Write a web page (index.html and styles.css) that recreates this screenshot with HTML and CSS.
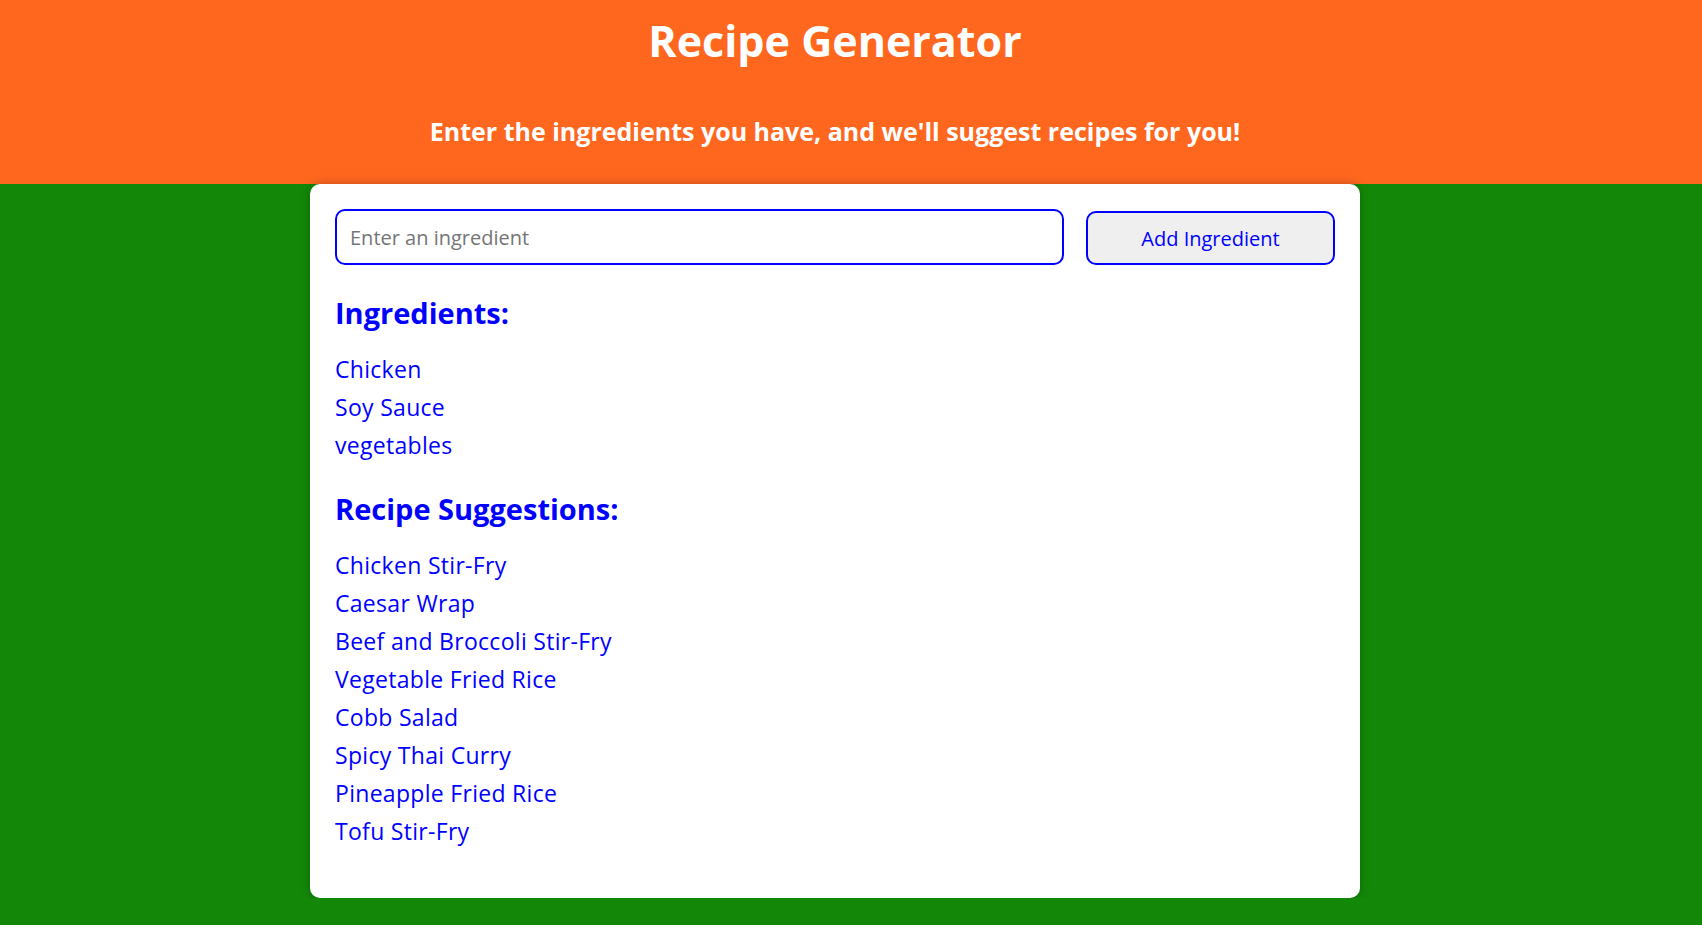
FILE: index.html
```html
<!DOCTYPE html>
<html lang="en">
<head>
<meta charset="utf-8">
<title>Recipe Generator</title>
<link rel="stylesheet" href="styles.css">
</head>
<body>
<header class="site-header">
  <h1 class="site-title">Recipe Generator</h1>
  <p class="site-subtitle">Enter the ingredients you have, and we'll suggest recipes for you!</p>
</header>
<main class="page">
  <section class="card">
    <div class="entry-row">
      <input class="entry-input" type="text" placeholder="Enter an ingredient">
      <button class="entry-button" type="button">Add Ingredient</button>
    </div>
    <h2 class="section-title first">Ingredients:</h2>
    <ul class="item-list">
      <li>Chicken</li>
      <li>Soy Sauce</li>
      <li>vegetables</li>
    </ul>
    <h2 class="section-title second">Recipe Suggestions:</h2>
    <ul class="item-list last">
      <li>Chicken Stir-Fry</li>
      <li>Caesar Wrap</li>
      <li>Beef and Broccoli Stir-Fry</li>
      <li>Vegetable Fried Rice</li>
      <li>Cobb Salad</li>
      <li>Spicy Thai Curry</li>
      <li>Pineapple Fried Rice</li>
      <li>Tofu Stir-Fry</li>
    </ul>
  </section>
</main>
</body>
</html>
```

FILE: styles.css
```css
html {
  background: #138808;
}
html, body {
  margin: 0;
  padding: 0;
}
body {
  font-family: "Open Sans", "DejaVu Sans", sans-serif;
  color: #0000ff;
}
.site-header {
  background: #ff671f;
  color: #ffffff;
  text-align: center;
  padding: 12px 32px 0 0;
  height: 172px;
}
.site-title {
  margin: 0;
  font-size: 43px;
  font-weight: 700;
  line-height: 58px;
}
.site-subtitle {
  margin: 45px 0 0;
  font-size: 25px;
  font-weight: 700;
  line-height: 32px;
}
.page {
  display: flex;
  justify-content: center;
  padding-right: 32px;
}
.card {
  width: 1000px;
  background: #ffffff;
  border-radius: 10px;
  padding: 25px 25px 48px;
  box-shadow: 0 0 10px rgba(0, 0, 0, 0.25);
}
.entry-row {
  display: flex;
  align-items: flex-end;
  gap: 22px;
}
.entry-input {
  flex: 1;
  height: 56px;
  box-sizing: border-box;
  border: 2px solid #0000ff;
  border-radius: 10px;
  padding: 0 13px;
  font-family: inherit;
  font-size: 20px;
  color: #0000ff;
  outline: none;
}
.entry-input::placeholder {
  color: #757575;
}
.entry-button {
  width: 249px;
  height: 54px;
  box-sizing: border-box;
  border: 2px solid #0000ff;
  border-radius: 10px;
  background: #efefef;
  font-family: inherit;
  font-size: 20px;
  color: #0000ff;
}
.section-title {
  margin: 0;
  font-size: 29px;
  font-weight: 700;
  line-height: 36px;
}
.section-title.first {
  margin-top: 30px;
}
.section-title.second {
  margin-top: 27px;
}
.item-list {
  list-style: none;
  margin: 19px 0 0;
  padding: 0;
  font-size: 23px;
  letter-spacing: 0.3px;
  line-height: 38px;
}
```
